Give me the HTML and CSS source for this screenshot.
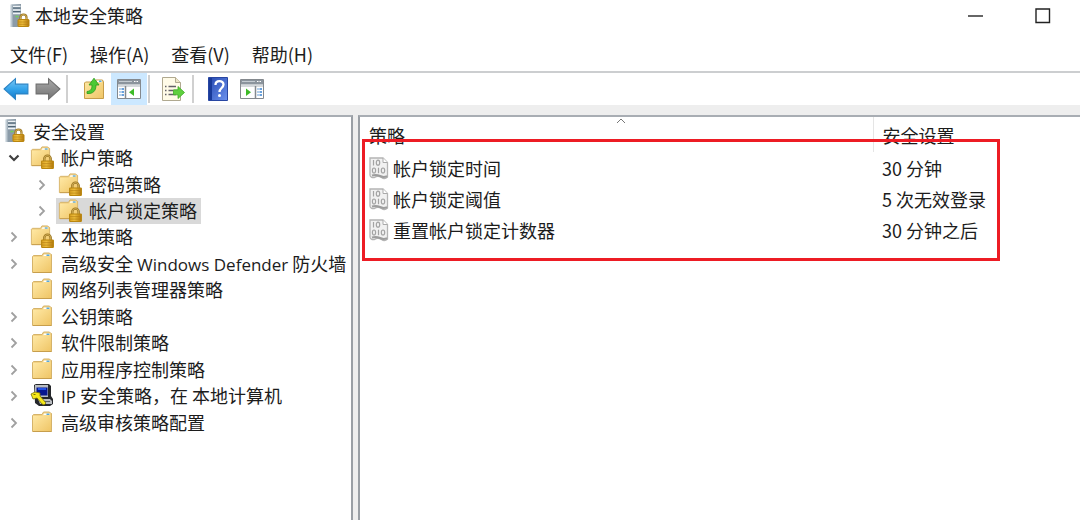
FILE: index.html
```html
<!DOCTYPE html>
<html lang="zh-CN">
<head>
<meta charset="utf-8">
<title>本地安全策略</title>
<link rel="stylesheet" href="styles.css">
</head>
<body>
<svg class="defs" aria-hidden="true">
  <defs>
    <linearGradient id="gold" x1="0" y1="0" x2="1" y2="1"><stop offset="0" stop-color="#ffe9a6"/><stop offset="1" stop-color="#efc566"/></linearGradient>
    <linearGradient id="brass" x1="0" y1="0" x2="1" y2="0"><stop offset="0" stop-color="#d9a021"/><stop offset=".4" stop-color="#edbd3c"/><stop offset="1" stop-color="#b57a0c"/></linearGradient>
    <linearGradient id="steel" x1="0" y1="0" x2="1" y2="0"><stop offset="0" stop-color="#c9d3da"/><stop offset="1" stop-color="#8796a3"/></linearGradient>
    <linearGradient id="sky" x1="0" y1="0" x2="0" y2="1"><stop offset="0" stop-color="#7cc8f5"/><stop offset=".5" stop-color="#35a4ea"/><stop offset="1" stop-color="#1479c9"/></linearGradient>
    <linearGradient id="ash" x1="0" y1="0" x2="0" y2="1"><stop offset="0" stop-color="#a9a9a9"/><stop offset="1" stop-color="#727272"/></linearGradient>
    <linearGradient id="ink" x1="0" y1="0" x2="1" y2="1"><stop offset="0" stop-color="#2548b0"/><stop offset="1" stop-color="#6c92ee"/></linearGradient>
  </defs>
  <symbol id="lock" viewBox="0 0 12 14">
    <path d="M3 7V4.500a3 3 0 0 1 6 0V7" fill="none" stroke="#97721f" stroke-width="2.200"/>
    <path d="M3 7V4.500a3 3 0 0 1 6 0V7" fill="none" stroke="#d6b45c" stroke-width=".9"/>
    <rect x=".5" y="6.500" width="11" height="7" rx=".6" fill="url(#brass)" stroke="#b9860f"/>
    <path d="M1 9h10M1 11.300h10" stroke="#b17c12" stroke-width=".6"/>
  </symbol>
  <symbol id="folder" viewBox="0 0 24 24">
    <path d="M2.500 21.500V5.500l1-1h8.500l1.500-2.500h6l1.500 1.500h.5v18z" fill="#f3d283" stroke="#d5b36a"/>
    <path d="M14 3.500h6v2h-7z" fill="#fff"/><path d="M16.500 3.500h3v1.600h-3z" fill="#58a9d8"/>
    <path d="M3 8V6h9l1.500-1H21v16H3z" fill="url(#gold)"/>
    <path d="M3 21.500h18.500" stroke="#c79e4c"/>
  </symbol>
  <symbol id="folder-lock" viewBox="0 0 24 24">
    <use href="#folder" x="-1" y="0" width="23" height="23"/>
    <use href="#lock" x="11" y="9" width="13" height="15"/>
  </symbol>
  <symbol id="server" viewBox="0 0 24 24">
    <path d="M3 1l2-1h9v23H3z" fill="url(#steel)"/>
    <path d="M5.500 1H14v22H5.500z" fill="#8b9ba8"/>
    <path d="M6 2.500h7.500M6 6h7.500M6 9.500h7.500" stroke="#eef3f6" stroke-width="1.500"/>
    <path d="M6 4h7.500M6 7.500h7.500" stroke="#4e6475" stroke-width="1"/>
    <path d="M8.500 12.500h3" stroke="#73d157" stroke-width="1.600"/>
    <path d="M3.500 1v22" stroke="#dce4e9"/>
    <use href="#lock" x="10" y="9" width="13" height="14"/>
  </symbol>
  <symbol id="ipsec" viewBox="0 0 24 24">
    <path d="M4 2l2-1h13l2 2v10l2 3v5l-3 2H9l-4-3z" fill="#25272b"/>
    <path d="M5 2h13v12H5z" fill="#b8bcc0"/>
    <path d="M6.500 4.500h11v8h-11z" fill="#06158f"/><path d="M8 6h8" stroke="#2b66ff" stroke-width="1.500"/>
    <path d="M8 16h12l2 2v3H10z" fill="#b9bcc0"/><path d="M10 18.500h10" stroke="#5b5f63"/>
    <path d="M1 11l4-2 5 1v3l6 7-2 2-2-1-5-6-4 1z" fill="#f5e719" stroke="#776f08" stroke-width=".8"/>
    <path d="M3.500 11.500h2" stroke="#776f08"/>
  </symbol>
  <symbol id="policy" viewBox="0 0 20 24">
    <path d="M1 2h13l4.500 4.500V21c-2 2-4 2-6 .5-3-2-5-1.500-7 0C3 22 1 21 1 19z" fill="#f1f1f1" stroke="#b4b4b4" stroke-width="1.300"/>
    <path d="M14 2v4.500h4.500" fill="#fff" stroke="#aaa"/>
    <g fill="none" stroke="#a3a3a3" stroke-width="1.200">
      <path d="M4.500 4v5.500"/><ellipse cx="9" cy="6.700" rx="1.700" ry="2.500"/>
      <ellipse cx="5" cy="14.500" rx="1.600" ry="2.500"/><path d="M9.500 11.700v5.500"/><ellipse cx="14" cy="14.500" rx="1.700" ry="2.500"/>
    </g>
    <path d="M3 19.500c3-1 5-1 8 .5 3 1.500 5 1 7 .2" stroke="#9d9d9d" stroke-width="2" fill="none"/>
  </symbol>
  <symbol id="arrow" viewBox="0 0 24 22">
    <path d="M1 11L11.500 1.500v5H23v9H11.500v5z"/>
  </symbol>
  <symbol id="up" viewBox="0 0 24 24">
    <path d="M2.500 21.500V6l1-1h9L14 3h6.500l1 2v16.500z" fill="url(#gold)" stroke="#c69d49"/>
    <path d="M14.500 3.500h5.500v1.700h-6z" fill="#fff"/><path d="M17 3.500h2.500V5H17z" fill="#58a9d8"/>
    <path d="M5 14.500c4-.5 5-3 5-6.500H7L12 1.200l5 6.800h-3c0 6-3 9-9 8.500z" fill="#4cc934" stroke="#2a9a1a" stroke-width=".8"/>
  </symbol>
  <symbol id="pane" viewBox="0 0 24 20">
    <path d="M.5.5h23v19H.5z" fill="#fff" stroke="#84898e"/>
    <path d="M1 1h22v4.500H1z" fill="#8b949d"/><path d="M2 2.500h13" stroke="#c4cbd1"/><path d="M17 2.500h1.500M19.500 2.500H21" stroke="#fff"/>
    <path d="M1 7h22" stroke="#a9b1b8"/>
  </symbol>
  <symbol id="tree-pane" viewBox="0 0 24 20">
    <use href="#pane" width="24" height="20"/>
    <path d="M8.500 7v12.500" stroke="#84898e" stroke-width="1.500"/>
    <path d="M2.500 10h1M2.500 13h1M2.500 16h1M4.500 10H7M4.500 13H7M4.500 16H7" stroke="#3a83cf" stroke-width="1.500"/>
    <path d="M17 9.500v7.500l-5-3.700z" fill="#3dba27"/>
  </symbol>
  <symbol id="action-pane" viewBox="0 0 24 20">
    <use href="#pane" width="24" height="20"/>
    <path d="M15.500 7v12.500" stroke="#84898e" stroke-width="1.500"/>
    <path d="M17.500 10h1M17.500 13h1M17.500 16h1M19.500 10H22M19.500 13H22M19.500 16H22" stroke="#3a83cf" stroke-width="1.500"/>
    <path d="M6 9.500v7.500l5-3.700z" fill="#3dba27"/>
  </symbol>
  <symbol id="export" viewBox="0 0 24 24">
    <path d="M1.500.5h13l5 5v18h-18z" fill="#fffbe8" stroke="#b0a990"/>
    <path d="M14.500.5v5h5" fill="#eee6c8" stroke="#b0a990"/>
    <path d="M4 9.500h1.500M4 13.500h1.500M4 17.500h1.500M7.500 9.500H15M7.500 13.500H12M7.500 17.500H15" stroke="#636168" stroke-width="1.300"/>
    <path d="M12.500 12.800H17V9.500l6.500 6-6.500 6v-3.700h-4.500z" fill="#5fd03e" stroke="#3daa25" stroke-width=".8"/>
  </symbol>
  <symbol id="help" viewBox="0 0 20 24">
    <path d="M.5.5h19v23H.5z" fill="url(#ink)" stroke="#2846a2"/>
    <path d="M1 1h3v22H1z" fill="#193a99"/>
    <path d="M7.500 8c0-5 8-5 8-.5 0 3.500-4 3.500-4 7.500" fill="none" stroke="#fff" stroke-width="2.300"/><circle cx="11.500" cy="18.500" r="1.500" fill="#fff"/>
  </symbol>
  <symbol id="chevron" viewBox="0 0 8 12"><path d="M1.500 1.500L6 6l-4.500 4.500" fill="none" stroke="currentColor" stroke-width="1.800"/></symbol>
  <symbol id="chevron-open" viewBox="0 0 12 8"><path d="M1.500 1.500L6 6l4.500-4.500" fill="none" stroke="currentColor" stroke-width="2.200"/></symbol>
</svg>

<div class="window">
  <header class="titlebar">
    <svg class="icon"><use href="#server"/></svg>
    <h1 class="title">本地安全策略</h1>
    <button class="caption" aria-label="最小化"><svg width="16" height="16"><path d="M0 8h15" stroke="#333" stroke-width="1.500"/></svg></button>
    <button class="caption" aria-label="最大化"><svg width="16" height="16"><path d="M1 1h13.500v13.500H1z" fill="none" stroke="#222" stroke-width="1.400"/></svg></button>
  </header>

  <nav class="menubar">
    <button class="menu">文件(F)</button>
    <button class="menu">操作(A)</button>
    <button class="menu">查看(V)</button>
    <button class="menu">帮助(H)</button>
  </nav>

  <div class="toolbar" role="toolbar">
    <button class="tool" aria-label="后退"><svg class="arrow back"><use href="#arrow"/></svg></button>
    <button class="tool" aria-label="前进"><svg class="arrow forward"><use href="#arrow"/></svg></button>
    <span class="divider"></span>
    <button class="tool up" aria-label="向上"><svg class="icon"><use href="#up"/></svg></button>
    <button class="tool active" aria-label="显示控制台树"><svg class="pane-icon"><use href="#tree-pane"/></svg></button>
    <span class="divider"></span>
    <button class="tool export" aria-label="导出列表"><svg class="icon"><use href="#export"/></svg></button>
    <span class="divider"></span>
    <button class="tool help" aria-label="帮助"><svg class="icon"><use href="#help"/></svg></button>
    <button class="tool" aria-label="显示操作窗格"><svg class="pane-icon"><use href="#action-pane"/></svg></button>
  </div>

  <main class="panes">
    <nav class="tree">
      <div class="row"><a class="node" href="#"><svg class="icon"><use href="#server"/></svg>安全设置</a></div>
      <ul class="branch">
        <li>
          <div class="row"><button class="twisty open" aria-label="折叠"><svg><use href="#chevron-open"/></svg></button><a class="node" href="#"><svg class="icon"><use href="#folder-lock"/></svg>帐户策略</a></div>
          <ul class="branch nested">
            <li><div class="row"><button class="twisty" aria-label="展开"><svg><use href="#chevron"/></svg></button><a class="node" href="#"><svg class="icon"><use href="#folder-lock"/></svg>密码策略</a></div></li>
            <li><div class="row"><button class="twisty" aria-label="展开"><svg><use href="#chevron"/></svg></button><a class="node selected" href="#"><svg class="icon"><use href="#folder-lock"/></svg>帐户锁定策略</a></div></li>
          </ul>
        </li>
        <li><div class="row"><button class="twisty" aria-label="展开"><svg><use href="#chevron"/></svg></button><a class="node" href="#"><svg class="icon"><use href="#folder-lock"/></svg>本地策略</a></div></li>
        <li class="spaced"><div class="row"><button class="twisty" aria-label="展开"><svg><use href="#chevron"/></svg></button><a class="node" href="#"><svg class="icon"><use href="#folder"/></svg><span>高级安全 <span class="latin">Windows Defender</span> 防火墙</span></a></div></li>
        <li><div class="row"><span class="twisty"></span><a class="node" href="#"><svg class="icon"><use href="#folder"/></svg>网络列表管理器策略</a></div></li>
        <li class="spaced"><div class="row"><button class="twisty" aria-label="展开"><svg><use href="#chevron"/></svg></button><a class="node" href="#"><svg class="icon"><use href="#folder"/></svg>公钥策略</a></div></li>
        <li><div class="row"><button class="twisty" aria-label="展开"><svg><use href="#chevron"/></svg></button><a class="node" href="#"><svg class="icon"><use href="#folder"/></svg>软件限制策略</a></div></li>
        <li class="spaced"><div class="row"><button class="twisty" aria-label="展开"><svg><use href="#chevron"/></svg></button><a class="node" href="#"><svg class="icon"><use href="#folder"/></svg>应用程序控制策略</a></div></li>
        <li><div class="row"><button class="twisty" aria-label="展开"><svg><use href="#chevron"/></svg></button><a class="node" href="#"><svg class="icon"><use href="#ipsec"/></svg><span><span class="latin">IP</span> 安全策略，在 本地计算机</span></a></div></li>
        <li class="spaced"><div class="row"><button class="twisty" aria-label="展开"><svg><use href="#chevron"/></svg></button><a class="node" href="#"><svg class="icon"><use href="#folder"/></svg>高级审核策略配置</a></div></li>
      </ul>
    </nav>

    <section class="list">
      <table class="policies">
        <thead>
          <tr>
            <th scope="col">策略<svg class="sort" viewBox="0 0 10 6"><path d="M1 5l4-4 4 4" fill="none" stroke="#777"/></svg></th>
            <th scope="col" class="setting">安全设置</th>
          </tr>
        </thead>
        <tbody>
          <tr><td><span class="policy"><svg class="policy-icon"><use href="#policy"/></svg>帐户锁定时间</span></td><td>30 分钟</td></tr>
          <tr><td><span class="policy"><svg class="policy-icon"><use href="#policy"/></svg>帐户锁定阈值</span></td><td>5 次无效登录</td></tr>
          <tr><td><span class="policy"><svg class="policy-icon"><use href="#policy"/></svg>重置帐户锁定计数器</span></td><td>30 分钟之后</td></tr>
        </tbody>
      </table>
      <div class="highlight"></div>
    </section>
  </main>
</div>
</body>
</html>
```
FILE: styles.css
```css
* { box-sizing: border-box; }

body {
  margin: 0;
  background: #fff;
  color: #1c1c1c;
  font: 18px/24px "Noto Sans CJK SC", sans-serif;
}

button {
  padding: 0;
  border: 0;
  background: none;
  color: inherit;
  font: inherit;
}

svg { display: block; flex: none; }

.defs { position: absolute; width: 0; height: 0; }
.icon { width: 24px; height: 24px; }
.latin { font-family: "Open Sans", sans-serif; font-size: 17px; line-height: 1; }

.window { display: flex; flex-direction: column; min-height: 100vh; }

.titlebar { display: flex; align-items: center; height: 32px; padding: 0 4px 0 7px; }
.title { flex: 1; margin: 0 0 0 4px; padding-bottom: 2px; font-size: 18px; font-weight: 400; }
.caption { display: grid; place-items: center; width: 67px; height: 32px; }

.menubar { display: flex; gap: 22px; padding: 10px 10px 5px; border-bottom: 2px solid #ccced0; }

.toolbar { display: flex; align-items: stretch; height: 32px; background: #fff; }
.tool { display: grid; place-items: center; width: 34px; }
.tool:first-child { width: 31px; }
.arrow { width: 26px; height: 24px; }
.back { fill: url(#sky); stroke: #2b83c4; }
.forward { fill: url(#ash); stroke: #6f6f6f; transform: scaleX(-1); }
.pane-icon { width: 24px; height: 20px; }
.divider { width: 2px; margin: 2px 1px; background: #d0d0d0; }
.tool.up { width: 42px; padding-left: 8px; }
.tool.active { width: 36px; background: #cce8ff; }
.tool.export { width: 40px; padding-left: 4px; }
.tool.help { width: 40px; padding-left: 6px; }

.panes {
  flex: 1;
  display: grid;
  grid-template-columns: 353px 1fr;
  gap: 5px;
  padding-top: 10px;
  background: #eee;
}

.tree, .list { border-top: 2px solid #a8adb3; background: #fff; }
.tree { padding-top: 2px; border-right: 2px solid #9a9fa5; }
.list { position: relative; border-left: 2px solid #9a9fa5; }

.branch { margin: 0; padding: 0; list-style: none; }
.nested { padding: 1px 0 0 28px; }
.spaced { padding-top: 1px; }
.row { display: flex; height: 26px; }
.twisty { display: grid; flex: none; place-items: center; width: 28px; color: #a0a0a0; }
.twisty svg { width: 8px; height: 12px; }
.open { color: #404040; }
.open svg { width: 12px; height: 8px; }
.node {
  display: flex;
  align-items: center;
  gap: 7px;
  padding: 0 4px 2px 2px;
  color: inherit;
  text-decoration: none;
  white-space: nowrap;
}
.selected { background: #d9d9d9; }

.policies { width: 100%; border-collapse: collapse; table-layout: fixed; }
.policies th, .policies td { padding: 0 9px; font-weight: 400; text-align: left; }
.policies th { position: relative; height: 35px; padding-top: 1px; }
.policies td { height: 31px; }
.policies .setting { width: 207px; border-left: 1px solid #e5e5e5; }
.policy { display: flex; align-items: center; gap: 4px; }
.policy-icon { width: 20px; height: 24px; }
.sort { position: absolute; top: 1px; left: 50%; width: 10px; height: 6px; }

.highlight {
  position: absolute;
  top: 22px;
  right: 80px;
  left: 2px;
  height: 122px;
  border: 3px solid #ed1c24;
  pointer-events: none;
}
```
